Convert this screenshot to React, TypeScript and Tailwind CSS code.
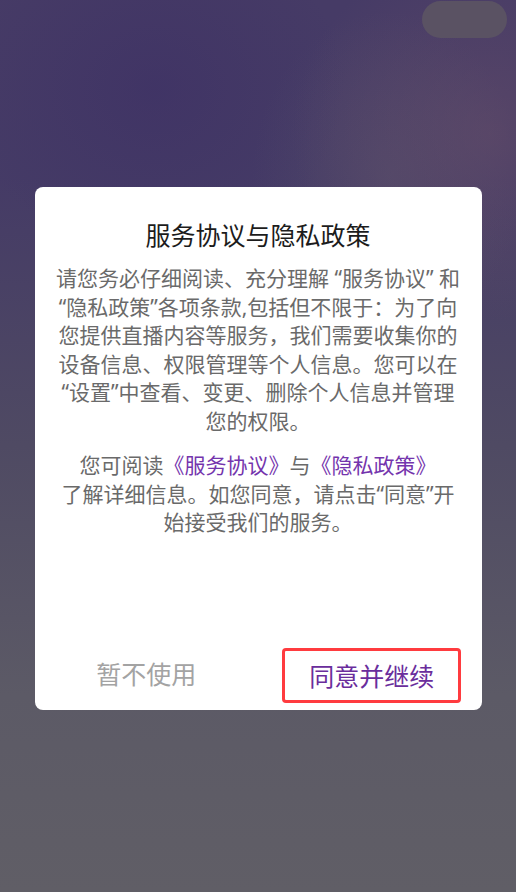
import React from "react";

const cjk = "font-['Noto_Sans','Noto_Sans_CJK_SC',sans-serif]";

export default function App() {
  return (
    <div
      className={`relative min-h-[892px] w-full overflow-hidden bg-[radial-gradient(ellipse_55%_30%_at_95%_15%,rgba(115,85,105,0.4),transparent_70%),radial-gradient(ellipse_35%_25%_at_75%_20%,rgba(100,95,110,0.3),transparent_75%),radial-gradient(ellipse_50%_25%_at_30%_10%,rgba(55,40,100,0.35),transparent_75%),linear-gradient(180deg,#463b66_0%,#453b66_20%,#4f4a63_50%,#5c5a66_78%,#605e66_100%)] ${cjk}`}
    >
      {/* top-right pill */}
      <div className="absolute right-[9px] top-[1px] h-[37px] w-[85px] rounded-full bg-[#5a5263]" />

      <div className="flex justify-center px-[34px] pt-[187px]">
        {/* dialog */}
        <div className="flex h-[523px] w-[447px] flex-col rounded-[8px] bg-white">
          <div className="px-[20px] pt-[32px] text-center">
            <h1 className="text-[25px] leading-[32px] font-normal text-[#1c1c1c]">
              服务协议与隐私政策
            </h1>
            <p className="mt-[13px] whitespace-nowrap text-[21px] leading-[28.5px] text-[#6a6a6a]">
              请您务必仔细阅读、充分理解 “服务协议” 和
              <br />
              “隐私政策”各项条款,包括但不限于：为了向
              <br />
              您提供直播内容等服务，我们需要收集你的
              <br />
              设备信息、权限管理等个人信息。您可以在
              <br />
              “设置”中查看、变更、删除个人信息并管理
              <br />
              您的权限。
            </p>
            <p className="mt-[16px] whitespace-nowrap text-[21px] leading-[28.5px] text-[#6a6a6a]">
              您可阅读<span className="text-[#7434ad]">《服务协议》</span>与
              <span className="text-[#7434ad]">《隐私政策》</span>
              <br />
              了解详细信息。如您同意，请点击“同意”开
              <br />
              始接受我们的服务。
            </p>
          </div>

          {/* buttons */}
          <div className="mt-auto flex h-[62px]">
            <button className="flex flex-1 items-start justify-center pt-[10px] text-[25px] leading-[32px] text-[#a3a3a3]">
              暂不使用
            </button>
            <div className="flex flex-1 items-start justify-center">
              <button className="flex h-[55px] w-[179px] translate-x-[2px] items-center justify-center rounded-[4px] border-[3px] border-[#ff3b3f] text-[25px] leading-[32px] text-[#6a2d9c]">
                同意并继续
              </button>
            </div>
          </div>
        </div>
      </div>
    </div>
  );
}
